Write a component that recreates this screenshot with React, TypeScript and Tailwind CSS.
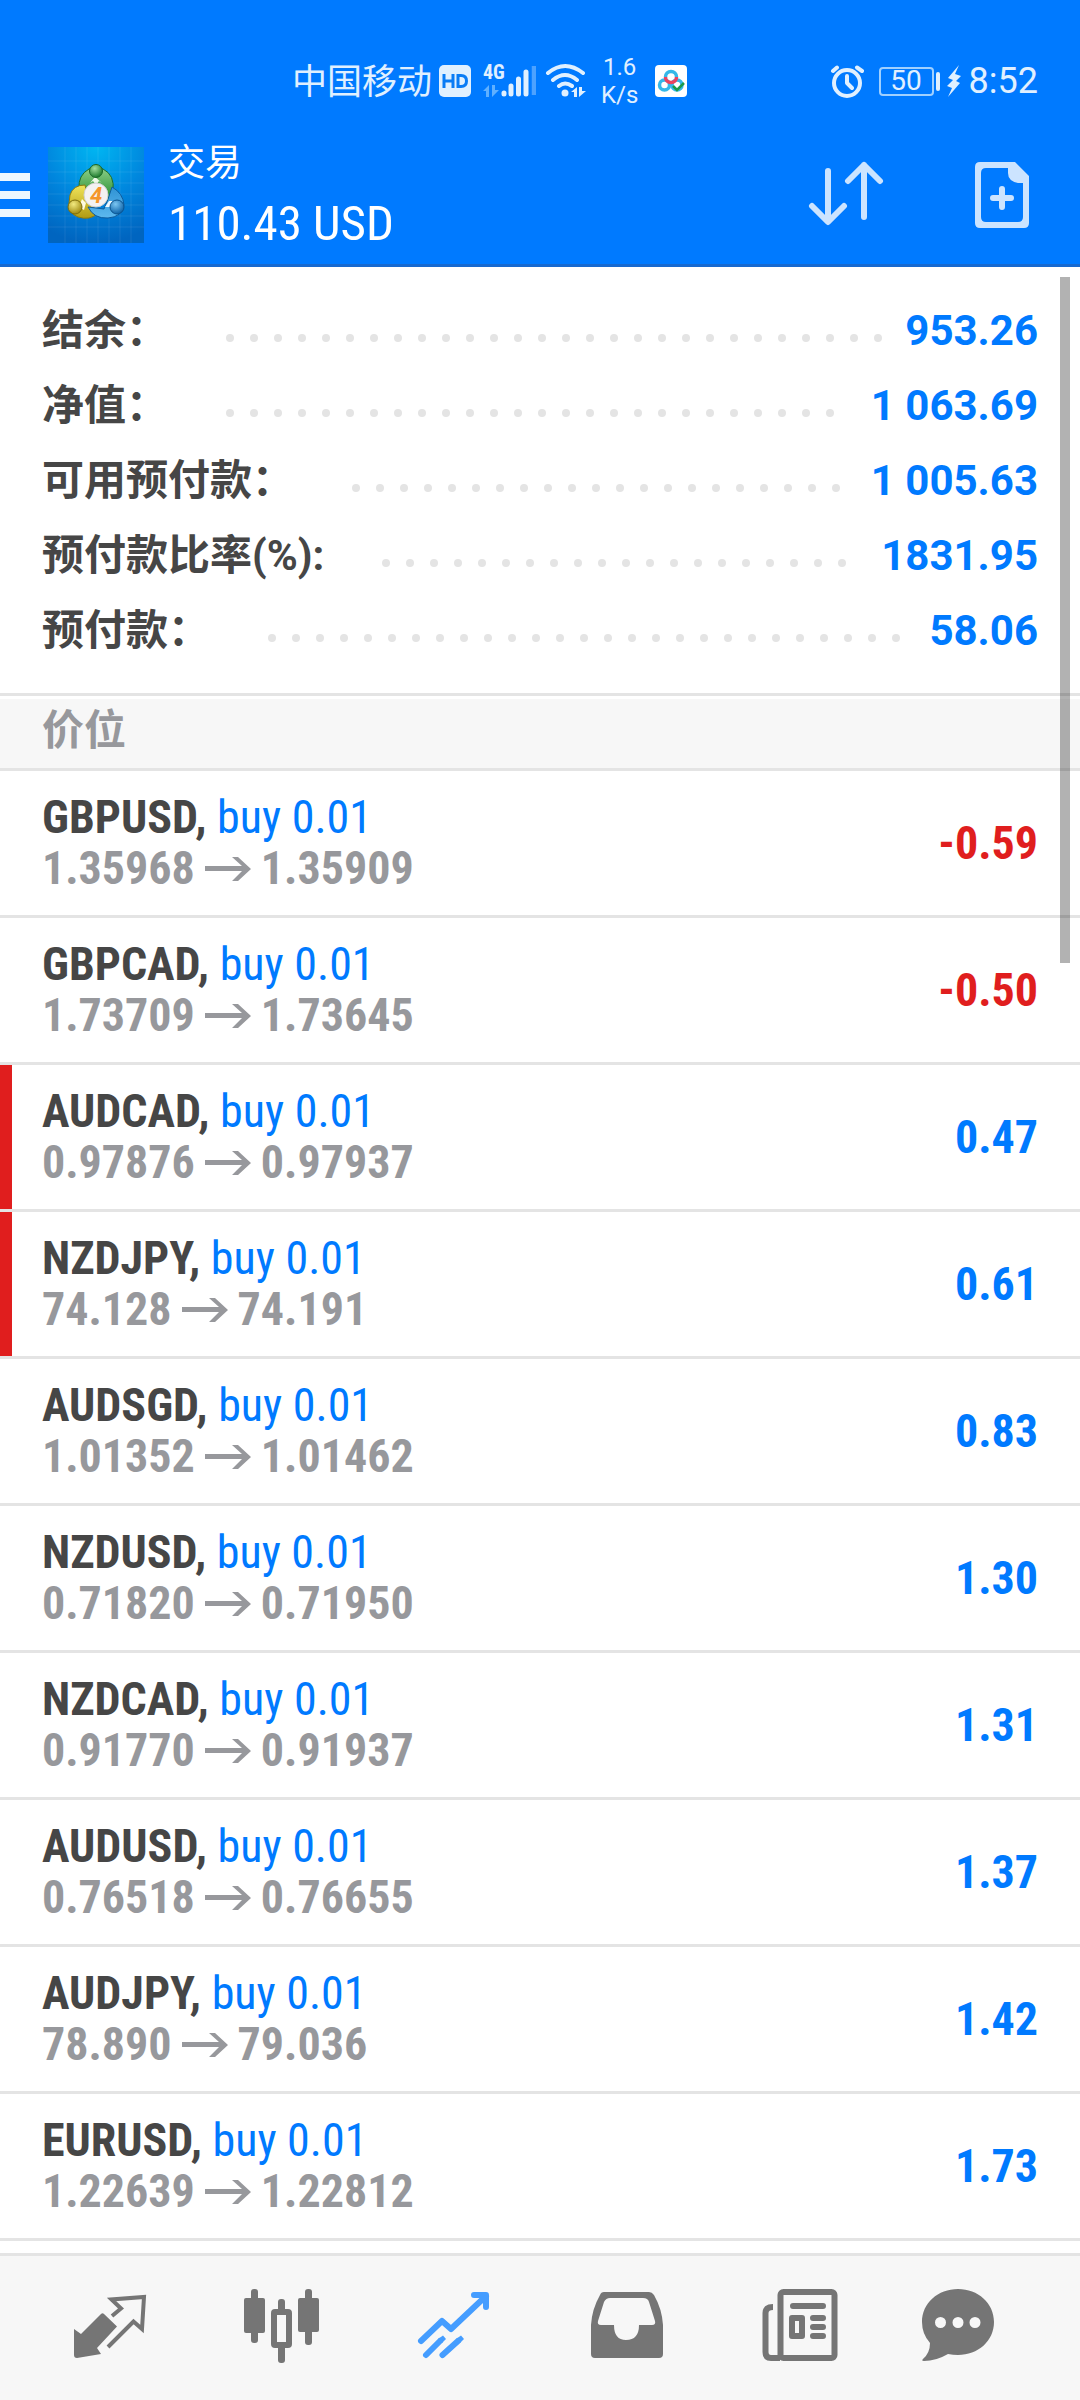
import type { ReactNode } from "react";

type SummaryItem = { label: string; value: string };
type Position = {
  symbol: string;
  open: string;
  current: string;
  profit: string;
  flagged?: boolean;
};

const summary: SummaryItem[] = [
  { label: "结余：", value: "953.26" },
  { label: "净值：", value: "1 063.69" },
  { label: "可用预付款：", value: "1 005.63" },
  { label: "预付款比率(%):", value: "1831.95" },
  { label: "预付款：", value: "58.06" },
];

const positions: Position[] = [
  { symbol: "GBPUSD", open: "1.35968", current: "1.35909", profit: "-0.59" },
  { symbol: "GBPCAD", open: "1.73709", current: "1.73645", profit: "-0.50" },
  { symbol: "AUDCAD", open: "0.97876", current: "0.97937", profit: "0.47", flagged: true },
  { symbol: "NZDJPY", open: "74.128", current: "74.191", profit: "0.61", flagged: true },
  { symbol: "AUDSGD", open: "1.01352", current: "1.01462", profit: "0.83" },
  { symbol: "NZDUSD", open: "0.71820", current: "0.71950", profit: "1.30" },
  { symbol: "NZDCAD", open: "0.91770", current: "0.91937", profit: "1.31" },
  { symbol: "AUDUSD", open: "0.76518", current: "0.76655", profit: "1.37" },
  { symbol: "AUDJPY", open: "78.890", current: "79.036", profit: "1.42" },
  { symbol: "EURUSD", open: "1.22639", current: "1.22812", profit: "1.73" },
];

function StatusBar() {
  return (
    <div className="flex h-[108px] items-center justify-between pt-[54px] pr-[42px] pl-[292px] text-[#e0f0ff]">
      <div className="flex items-center">
        <span className="pt-[4px] text-[35px] leading-[50px]">中国移动</span>
        <svg className="ml-[7px] h-[32px] w-[32px]" viewBox="0 0 32 32" role="img" aria-label="HD">
          <rect width="32" height="32" rx="5" fill="#e0f0ff" />
          <path
            d="M5 9V23M14 9V23M5 16H14M19 10.500H22Q27.500 10.500 27.500 16T22 21.500H19Z"
            fill="none"
            stroke="#0a7cf5"
            strokeWidth="3"
          />
        </svg>
        <svg className="ml-[11px] h-[52px] w-[54px]" viewBox="482 54 54 52" role="img" aria-label="4G">
          <text x="483" y="78" fill="#e0f0ff" fontSize="20" fontWeight="700" fontFamily="Roboto Condensed">
            4G
          </text>
          <path d="M483 90L489 84V96H486V90ZM492 84V96L499 89H495V84Z" fill="#5fb0ff" />
          <g stroke="#e0f0ff" strokeWidth="5" strokeLinecap="round">
            <path d="M504 92V93M511 85V93M518.500 78V93M526 71V93" />
            <path d="M534 65V94" stroke="#4da2ff" strokeWidth="4.500" strokeLinecap="butt" />
          </g>
        </svg>
        <svg className="ml-[9px] h-[36px] w-[42px]" viewBox="545 62 42 36" role="img" aria-label="Wi-Fi">
          <g fill="none" stroke="#e0f0ff" strokeWidth="4" strokeLinecap="round">
            <path d="M548 72Q565 58 583 72M553 79Q565 69 577 79M559 85Q565 80 572 85" />
          </g>
          <circle cx="565" cy="92" r="3.500" fill="#e0f0ff" />
          <path d="M571 91L577 86V96H574V91ZM579 86V96L586 90H582V86Z" fill="#e0f0ff" />
        </svg>
        <div className="ml-[14px] text-center text-[24px] leading-[28px]">
          <div>1.6</div>
          <div>K/s</div>
        </div>
        <svg className="ml-[17px] h-[32px] w-[32px]" viewBox="0 0 32 32" aria-hidden="true">
          <rect width="32" height="32" rx="4" fill="#fff" />
          <g fill="none" strokeWidth="3.500">
            <circle cx="9.500" cy="20" r="5" stroke="#35b8e8" />
            <circle cx="22" cy="20" r="5" stroke="#35b8e8" />
            <path d="M10.500 12A5.500 5.500 0 0 1 21.500 12" stroke="#35b8e8" />
            <path d="M21.500 12A5.500 5.500 0 0 1 10.500 12" stroke="#ea4360" />
            <path d="M18 21L22 25L29 18" stroke="#1c9a4a" strokeWidth="2.500" />
          </g>
        </svg>
      </div>
      <div className="flex items-center">
        <svg className="h-[34px] w-[34px]" viewBox="830 62 34 34" role="img" aria-label="闹钟">
          <g fill="none" stroke="#e0f0ff" strokeWidth="4" strokeLinecap="round" strokeLinejoin="round">
            <circle cx="847" cy="81" r="13" />
            <path d="M847 74V81L852 86M833 69L837 65.500M857 65.500L862 69" />
          </g>
        </svg>
        <div className="ml-[15px] flex h-[29px] w-[55px] items-center justify-center rounded-[4px] border-2 border-[#9fd0ff] text-[28px] leading-[28px]">
          50
        </div>
        <div className="ml-[2px] h-[19px] w-[4px] rounded-[2px] bg-[#e0f0ff]" />
        <svg className="ml-[7px] h-[32px] w-[14px]" viewBox="0 0 14 32" aria-hidden="true">
          <path d="M12 0L1 13L6 15L0 21L5 23L1 32L13 18L9 16L14 11L8 9Z" fill="#e0f0ff" />
        </svg>
        <span className="ml-[8px] text-[36px] leading-[56px]">8:52</span>
      </div>
    </div>
  );
}

function AppLogo() {
  return (
    <svg className="ml-[18px] h-[96px] w-[96px] shrink-0" viewBox="0 0 96 96" role="img" aria-label="MetaTrader 4">
      <defs>
        <radialGradient id="sky" cx="0.5" cy="0" r="1">
          <stop offset="0" stopColor="#00b6f2" />
          <stop offset="0.55" stopColor="#0085dd" />
          <stop offset="1" stopColor="#0065c0" />
        </radialGradient>
        <linearGradient id="green" x1="0" y1="0" x2="0" y2="1">
          <stop offset="0" stopColor="#8fd08a" />
          <stop offset="1" stopColor="#1f8a2a" />
        </linearGradient>
        <linearGradient id="yellow" x1="0" y1="0" x2="0" y2="1">
          <stop offset="0" stopColor="#f0e45a" />
          <stop offset="1" stopColor="#b09a12" />
        </linearGradient>
        <linearGradient id="blue" x1="0" y1="0" x2="0" y2="1">
          <stop offset="0" stopColor="#2f93d4" />
          <stop offset="1" stopColor="#5db8ee" />
        </linearGradient>
        <radialGradient id="greenHead" cx="0.4" cy="0.3" r="0.7">
          <stop offset="0" stopColor="#a4dfa0" />
          <stop offset="1" stopColor="#1c7a2b" />
        </radialGradient>
        <radialGradient id="yellowHead" cx="0.4" cy="0.3" r="0.7">
          <stop offset="0" stopColor="#f2ea80" />
          <stop offset="1" stopColor="#a08a10" />
        </radialGradient>
        <radialGradient id="blueHead" cx="0.4" cy="0.3" r="0.7">
          <stop offset="0" stopColor="#7cc6f2" />
          <stop offset="1" stopColor="#0c62a8" />
        </radialGradient>
      </defs>
      <rect width="96" height="96" fill="url(#sky)" />
      <path
        d="M17 0V96M28 0V96M39 0V96M50 0V96M61 0V96M72 0V96M83 0V96M0 14H96M0 25H96M0 36H96M0 47H96M0 58H96M0 69H96M0 80H96"
        stroke="#fff"
        strokeOpacity="0.08"
      />
      <path d="M31 42Q30 28 41 22Q48 18 55 22Q67 28 65 44L60 54L36 50Z" fill="url(#green)" stroke="#1b6e2a" />
      <path d="M47 30L42 36L45 34L48 38L51 34L54 36Z" fill="#eefbe8" />
      <path d="M37 38Q25 38 22 48Q18 66 30 70Q42 74 50 66L40 52Z" fill="url(#yellow)" stroke="#8a7a10" />
      <path d="M34 52L38 56L36 63L31 60Z" fill="#fffbe0" />
      <path d="M64 40Q75 46 76 58Q74 70 60 71Q46 72 40 60L56 62L60 52Z" fill="url(#blue)" stroke="#0d5b9d" />
      <path d="M61 54L67 54L62 60L57 60Z" fill="#eef8ff" />
      <circle cx="48" cy="24" r="6.500" fill="url(#greenHead)" stroke="#1a6628" />
      <circle cx="27" cy="60" r="7" fill="url(#yellowHead)" stroke="#7d6d0c" />
      <circle cx="69" cy="60" r="7" fill="url(#blueHead)" stroke="#0b5490" />
      <circle cx="48" cy="48" r="12" fill="#f4f2f2" stroke="#d0d0d0" />
      <text x="48" y="56" textAnchor="middle" fill="#f5962a" fontSize="22" fontWeight="700" fontStyle="italic" fontFamily="Roboto">
        4
      </text>
    </svg>
  );
}

function TitleBar() {
  return (
    <div className="flex h-[159px] items-center border-b-[3px] border-[#1769cf] pt-[18px] pr-[48px]">
      <button type="button" aria-label="菜单" className="flex shrink-0 flex-col gap-[10px]">
        <span className="h-[8px] w-[30px] bg-[#ecf7ff]" />
        <span className="h-[8px] w-[30px] bg-[#ecf7ff]" />
        <span className="h-[8px] w-[30px] bg-[#ecf7ff]" />
      </button>
      <AppLogo />
      <div className="ml-[24px] flex-1 pt-[4px] text-white">
        <h1 className="text-[37px] leading-[54px]">交易</h1>
        <p className="font-['Roboto_Condensed',Roboto,sans-serif] text-[49px] leading-[66px]">110.43 USD</p>
      </div>
      <button type="button" aria-label="排序" className="mr-[88px]">
        <svg className="h-[72px] w-[76px]" viewBox="28 30 76 72" aria-hidden="true">
          <path
            d="M48 42V92M32 77L48 93L64 77M84 88V36M68 52L84 36L100 52"
            fill="none"
            stroke="#cce4ff"
            strokeWidth="6"
            strokeLinecap="round"
            strokeLinejoin="round"
          />
        </svg>
      </button>
      <button type="button" aria-label="新订单">
        <svg className="h-[72px] w-[60px]" viewBox="192 29 60 72" aria-hidden="true">
          <path
            fillRule="evenodd"
            d="M200 32H235L249 46V93Q249 98 244 98H200Q195 98 195 93V37Q195 32 200 32ZM206 38Q201 38 201 43V87Q201 92 206 92H238Q243 92 243 87V53H238Q228 51 228 43V38Z"
            fill="#cce4ff"
          />
          <path d="M222 59V77M213 68H231" stroke="#cce4ff" strokeWidth="6" strokeLinecap="round" />
        </svg>
      </button>
    </div>
  );
}

function DotLeader() {
  return (
    <span aria-hidden="true" className="mt-[14px] mr-[4px] ml-[58px] flex h-[8px] flex-1 flex-wrap overflow-hidden">
      {Array.from({ length: 40 }, (_, i) => (
        <span key={i} className="mr-[16px] h-[8px] w-[8px] rounded-full bg-[#e4e4e4]" />
      ))}
    </span>
  );
}

function Summary() {
  return (
    <dl className="pt-[26px] pr-[42px] pb-[25px] pl-[42px] text-[42px] leading-[75px]">
      {summary.map((item) => (
        <div key={item.label} className="flex items-center">
          <dt className="font-bold text-[#464646]">{item.label}</dt>
          <DotLeader />
          <dd className="font-bold text-[#007aff]">{item.value}</dd>
        </div>
      ))}
    </dl>
  );
}

function PriceArrow() {
  return (
    <svg className="mx-[10px] h-[26px] w-[46px]" viewBox="0 0 46 26" role="img" aria-label="至">
      <path d="M0 10H37L27 1H33L46 13L33 25H27L37 15H0Z" fill="#97989c" />
    </svg>
  );
}

function PositionRow({ item }: { item: Position }) {
  const loss = item.profit.startsWith("-");
  return (
    <li
      className={
        item.flagged
          ? "relative flex items-center justify-between border-b-[3px] border-[#e4e4e4] px-[42px] py-[21px] before:absolute before:inset-y-0 before:left-0 before:w-[12px] before:bg-[#e01e1e]"
          : "relative flex items-center justify-between border-b-[3px] border-[#e4e4e4] px-[42px] py-[21px]"
      }
    >
      <div className="leading-[51px]">
        <p>
          <span className="font-bold text-[#464646]">{item.symbol},</span>{" "}
          <span className="text-[#007aff]">buy 0.01</span>
        </p>
        <p className="flex items-center font-bold text-[#97989c]">
          {item.open}
          <PriceArrow />
          {item.current}
        </p>
      </div>
      <span className={loss ? "font-bold text-[#e01e1e]" : "font-bold text-[#007aff]"}>{item.profit}</span>
    </li>
  );
}

function NavButton({ label, active, viewBox, children }: { label: string; active?: boolean; viewBox: string; children: ReactNode }) {
  return (
    <button
      type="button"
      aria-label={label}
      aria-current={active ? "page" : undefined}
      className={active ? "flex flex-1 justify-center text-[#459dff]" : "flex flex-1 justify-center text-[#757575]"}
    >
      <svg className="h-[96px] w-[96px]" viewBox={viewBox} fill="currentColor" aria-hidden="true">
        {children}
      </svg>
    </button>
  );
}

function TabBar() {
  return (
    <nav className="flex items-center border-t-[3px] border-[#e4e4e4] bg-[#f7f7f7] px-[24px] py-[24px]">
      <NavButton label="行情" viewBox="62 60 96 96">
        <path d="M74 109L81 114L101 94Q102.500 92.500 104 94L117 106.500L97 128L101 134L77 138Q74 138 74 135Z" />
        <path
          d="M112 96L121 88.500L111.500 79.500L144 77L142 109L133.500 101.500L108 127"
          fill="none"
          stroke="currentColor"
          strokeWidth="4"
        />
      </NavButton>
      <NavButton label="图表" viewBox="234 60 96 96">
        <rect x="244" y="78" width="21" height="35" rx="2" />
        <rect x="251" y="69" width="7" height="54" rx="3" />
        <rect x="298" y="78" width="21" height="34" rx="2" />
        <rect x="305" y="69" width="7" height="56" rx="3" />
        <rect x="278" y="79" width="7" height="15" rx="3" />
        <rect x="278" y="122" width="7" height="21" rx="3" />
        <rect x="274" y="92" width="15" height="33" rx="1" fill="none" stroke="currentColor" strokeWidth="6" />
      </NavButton>
      <NavButton label="交易" active viewBox="406 60 96 96">
        <g fill="none" stroke="currentColor" strokeWidth="6" strokeLinecap="round" strokeLinejoin="round">
          <path d="M421 121L442 101L451 109L486 76M474 75H486V87" />
          <path d="M426 135L440 121M442.500 135L458 121" />
        </g>
        <path d="M438 119L443 115.500L446 119L442 123ZM456 119L461 115.500L464 119L460 123Z" />
      </NavButton>
      <NavButton label="历史" viewBox="578 60 96 96">
        <path
          fillRule="evenodd"
          d="M604 72H649Q652 72 654 75Q662 89 663 105V134Q663 138 659 138H595Q591 138 591 134V105Q592 89 600 75Q601 72 604 72ZM610 78Q606 78 604 82L598 101Q597 105 601 105H614Q614 120 626 120Q639 120 639 105H652Q656 105 655 101L649 82Q648 78 643 78Z"
        />
      </NavButton>
      <NavButton label="新闻" viewBox="750 60 96 96">
        <g fill="none" stroke="currentColor" strokeWidth="6">
          <rect x="780.500" y="72" width="54" height="66" rx="3" />
          <path d="M773 87Q765.500 87 765.500 93V132Q765.500 138 771 138H780" />
          <path d="M793 86H823M813 98H823M813 107H823M813 116H823" strokeLinecap="round" />
          <rect x="792" y="98" width="10" height="18" strokeLinejoin="round" />
        </g>
      </NavButton>
      <NavButton label="聊天" viewBox="922 60 96 96">
        <path
          fillRule="evenodd"
          d="M958 69C978 69 994 83 994 102S978 135 958 135Q953 135 948 134Q936 141 924 141Q921 141 923 139Q930 133 930 123Q922 114 922 102C922 83 938 69 958 69ZM940.500 97A5.500 5.500 0 1 0 940.500 108A5.500 5.500 0 1 0 940.500 97ZM958 97A5.500 5.500 0 1 0 958 108A5.500 5.500 0 1 0 958 97ZM975 97A5.500 5.500 0 1 0 975 108A5.500 5.500 0 1 0 975 97Z"
        />
      </NavButton>
    </nav>
  );
}

export default function App() {
  return (
    <div className="flex min-h-screen flex-col bg-white font-['Roboto','Noto_Sans_CJK_SC',sans-serif]" lang="zh-CN">
      <header className="bg-[#007aff]">
        <StatusBar />
        <TitleBar />
      </header>
      <main className="relative flex-1">
        <Summary />
        <h2 className="border-y-[3px] border-[#e4e4e4] bg-[#f7f7f7] text-[42px] font-bold text-[#97989c]">
          <span className="block border-t-[3px] border-white pb-[6px] pl-[42px] leading-[63px]">价位</span>
        </h2>
        <ul className="font-['Roboto_Condensed',Roboto,sans-serif] text-[46px]">
          {positions.map((item) => (
            <PositionRow key={item.symbol} item={item} />
          ))}
        </ul>
        <div aria-hidden="true" className="absolute top-[10px] right-[10px] h-[686px] w-[10px] bg-black/30" />
      </main>
      <TabBar />
    </div>
  );
}
